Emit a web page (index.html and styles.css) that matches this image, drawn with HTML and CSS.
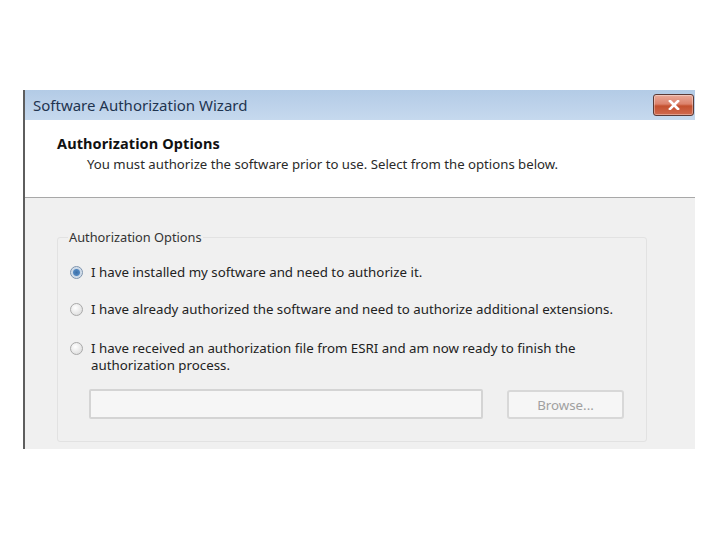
FILE: index.html
```html
<!DOCTYPE html>
<html>
<head>
    <title>Software Authorization Wizard</title>
    <link rel="stylesheet" href="styles.css">
</head>
<body>
    <div class="window">
        <div class="titlebar">
            <span class="title">Software Authorization Wizard</span>
            <button class="close" type="button">
                <svg width="12" height="10" viewBox="0 0 12 10">
                    <path d="M2 1 L10 9 M10 1 L2 9" stroke="#fff" stroke-width="2.6" stroke-linecap="square"/>
                </svg>
            </button>
        </div>

        <div class="header">
            <h1>Authorization Options</h1>
            <p>You must authorize the software prior to use. Select from the options below.</p>
        </div>

        <div class="content">
            <fieldset class="group">
                <legend>Authorization Options</legend>

                <label class="option">
                    <span class="radio checked"></span>
                    <span>I have installed my software and need to authorize it.</span>
                </label>

                <label class="option">
                    <span class="radio"></span>
                    <span>I have already authorized the software and need to authorize additional extensions.</span>
                </label>

                <label class="option">
                    <span class="radio"></span>
                    <span>I have received an authorization file from ESRI and am now ready to finish the<br>authorization process.</span>
                </label>

                <div class="file-row">
                    <input type="text" class="path" disabled>
                    <button type="button" class="browse" disabled>Browse...</button>
                </div>
            </fieldset>
        </div>
    </div>
</body>
</html>
```

FILE: styles.css
```css
* {
    box-sizing: border-box;
    margin: 0;
    padding: 0;
}

body {
    font-family: 'Noto Sans', 'Liberation Sans', sans-serif;
    background: #fff;
    color: #222;
}

.window {
    margin: 90px 0 0 23px;
    width: 672px;
    height: 359px;
    border-left: 2px solid #5e5e5e;
    display: flex;
    flex-direction: column;
}

.titlebar {
    height: 30px;
    background: linear-gradient(#b3cbe6, #c6d9ee);
    display: flex;
    align-items: center;
    justify-content: space-between;
    padding: 0 1px 0 8px;
}

.title {
    font-size: 15px;
    color: #1f3450;
}

.close {
    width: 41px;
    height: 22px;
    border: 1px solid #5a3a36;
    border-radius: 3px;
    background: linear-gradient(#eaaa9a 0%, #dc826c 45%, #c4502f 55%, #d06a4e 100%);
    display: flex;
    align-items: center;
    justify-content: center;
    box-shadow: inset 0 0 0 1px rgba(255, 255, 255, 0.35);
}

.header {
    height: 78px;
    background: #fff;
    border-bottom: 1px solid #a8a8a8;
    padding: 14px 0 0 32px;
}

.header h1 {
    font-size: 14.5px;
    font-weight: bold;
    color: #111;
    line-height: 18px;
    letter-spacing: 0.1px;
}

.header p {
    font-size: 13.2px;
    color: #2a2a2a;
    line-height: 18px;
    margin: 3px 0 0 30px;
}

.content {
    flex: 1;
    background: #f0f0f0;
    padding: 30px 48px 7px 32px;
}

.group {
    height: 100%;
    border: 1px solid #e2e2e2;
    border-radius: 3px;
    padding: 18px 12px 0 12px;
}

.group legend {
    font-size: 12.8px;
    color: #333;
    padding: 0 1px;
    margin-left: -2px;
}

.option {
    display: flex;
    align-items: flex-start;
    gap: 8px;
    font-size: 13.3px;
    line-height: 17px;
    color: #222;
    margin-bottom: 20px;
}

.option + .option + .option {
    margin-top: 22px;
    margin-bottom: 0;
}

.radio {
    flex: none;
    width: 13px;
    height: 13px;
    margin-top: 2px;
    border-radius: 50%;
    border: 1px solid #a9a9a9;
    background: radial-gradient(circle at 40% 35%, #fff, #d6d6d6);
}

.radio.checked {
    border-color: #7d93ad;
    background: radial-gradient(circle, #3c6fa6 0, #4f86c0 3px, #c9d7e6 4px, #eef2f7 100%);
}

.file-row {
    display: flex;
    gap: 24px;
    margin: 15px 0 0 19px;
}

.path {
    width: 394px;
    height: 30px;
    border: 2px solid #d4d4d4;
    border-radius: 2px;
    background: #f6f6f6;
}

.browse {
    width: 117px;
    height: 29px;
    margin-top: 1px;
    border: 2px solid #d8d8d8;
    border-radius: 3px;
    background: #f6f6f6;
    color: #a0a0a0;
    font-family: 'Noto Sans', 'Liberation Sans', sans-serif;
    font-size: 13.3px;
}
```
